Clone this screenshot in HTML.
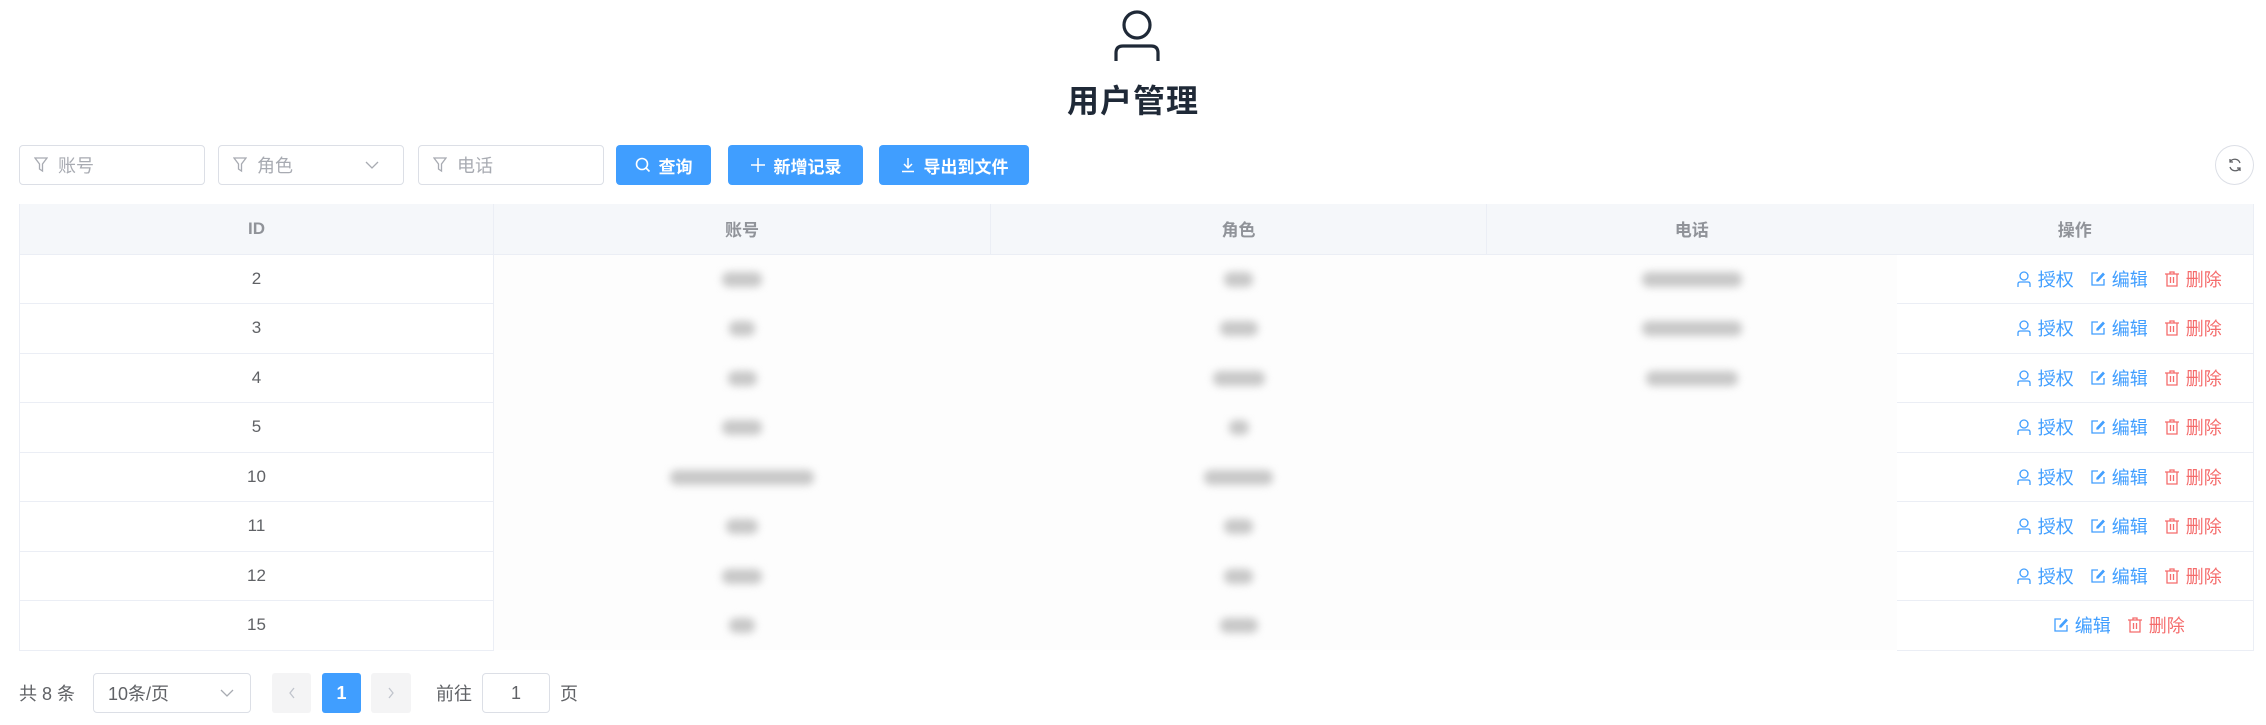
<!DOCTYPE html>
<html><head><meta charset="utf-8"><style>
*{box-sizing:border-box;margin:0;padding:0}
body{width:2266px;height:725px;background:#fff;font-family:"Liberation Sans","Noto Sans CJK SC",sans-serif;position:relative;overflow:hidden;color:#606266}
.abs{position:absolute}
.title{left:0;width:2266px;top:76px;text-align:center;font-size:32px;font-weight:bold;color:#1f2937;letter-spacing:1px}
.inp{top:145px;height:40px;border:1px solid #dcdfe6;border-radius:4px;display:flex;align-items:center;padding-left:14px;font-size:18px;color:#a8abb2}
.inp svg{margin-right:10px}
.btn{top:145px;height:40px;background:#409eff;border-radius:4px;color:#fff;font-size:17px;font-weight:bold;display:flex;align-items:center;justify-content:center}
.btn svg{margin-right:8px}
table{position:absolute;left:19px;top:204px;width:2235px;border-collapse:collapse;font-size:17px}
td,th{height:49.5px;text-align:center;border-bottom:1px solid #ebeef5;border-right:1px solid #ebeef5}
th{background:#f5f7fa;color:#909399;font-weight:bold;height:50px;font-size:17px}
tr td:first-child,tr th:first-child{border-left:1px solid #ebeef5}
tr td:last-child,tr th:last-child{border-right:1px solid #ebeef5}
td.m{border-right:none;border-bottom:none;background:#fdfdfd}
.b{display:inline-block;height:15px;background:#c8c8c8;filter:blur(4px);border-radius:7px;vertical-align:middle}
.ops{display:flex;justify-content:center;align-items:center;gap:16px;font-size:18px;padding-left:88px}
.op{display:flex;align-items:center;gap:6px;color:#409eff}
.op.d{color:#f56c6c}
.pg{top:673px;height:40px;display:flex;align-items:center;font-size:18px;color:#606266}
</style></head><body>
<svg class="abs" style="left:1108px;top:8px" width="58" height="56" viewBox="0 0 58 56"><circle cx="29" cy="17" r="13" fill="none" stroke="#1f2937" stroke-width="3.2"/><path d="M8 53V45Q8 38 15 38H43Q50 38 50 45V53" fill="none" stroke="#1f2937" stroke-width="3.2"/></svg>
<div class="abs title">用户管理</div>

<div class="abs inp" style="left:19px;width:186px"><svg width="14" height="16" viewBox="0 0 14 16"><path d="M1 1H13L8.5 7V14L5.5 12V7Z" fill="none" stroke="#a8abb2" stroke-width="1.3"/></svg>账号</div>
<div class="abs inp" style="left:218px;width:186px"><svg width="14" height="16" viewBox="0 0 14 16"><path d="M1 1H13L8.5 7V14L5.5 12V7Z" fill="none" stroke="#a8abb2" stroke-width="1.3"/></svg>角色<svg style="position:absolute;right:14px" width="14" height="10" viewBox="0 0 14 10"><path d="M1 2L7 8L13 2" fill="none" stroke="#a8abb2" stroke-width="1.3"/></svg></div>
<div class="abs inp" style="left:418px;width:186px"><svg width="14" height="16" viewBox="0 0 14 16"><path d="M1 1H13L8.5 7V14L5.5 12V7Z" fill="none" stroke="#a8abb2" stroke-width="1.3"/></svg>电话</div>
<div class="abs btn" style="left:616px;width:95px"><svg width="16" height="16" viewBox="0 0 16 16"><circle cx="7" cy="7" r="5.5" fill="none" stroke="#fff" stroke-width="1.6"/><path d="M11 11L14.5 14.5" stroke="#fff" stroke-width="1.6"/></svg>查询</div>
<div class="abs btn" style="left:728px;width:135px"><svg width="16" height="16" viewBox="0 0 16 16"><path d="M8 1V15M1 8H15" stroke="#fff" stroke-width="1.5"/></svg>新增记录</div>
<div class="abs btn" style="left:879px;width:150px"><svg width="16" height="16" viewBox="0 0 16 16"><path d="M8 1V11M4 7L8 11L12 7M2 14.5H14" fill="none" stroke="#fff" stroke-width="1.5"/></svg>导出到文件</div>
<div class="abs" style="left:2215px;top:145px;width:39px;height:40px;border:1px solid #dcdfe6;border-radius:50%;display:flex;align-items:center;justify-content:center"><svg width="16" height="16" viewBox="0 0 16 16"><path d="M13 6A5.5 5.5 0 0 0 3 5M3 2V5H6M3 10A5.5 5.5 0 0 0 13 11M13 14V11H10" fill="none" stroke="#606266" stroke-width="1.3"/></svg></div>

<table>
<tr><th style="width:474px">ID</th><th style="width:497px">账号</th><th style="width:496px">角色</th><th style="width:410px;border-right:none">电话</th><th>操作</th></tr>
<tr><td>2</td><td class="m"><span class="b" style="width:40px"></span></td><td class="m"><span class="b" style="width:29px"></span></td><td class="m"><span class="b" style="width:100px"></span></td><td><div class="ops"><span class="op"><svg width="16" height="18" viewBox="0 0 16 18"><circle cx="8" cy="6" r="4" fill="none" stroke="#409eff" stroke-width="1.3"/><path d="M2 17V14Q2 12 4 12H12Q14 12 14 14V17" fill="none" stroke="#409eff" stroke-width="1.3"/></svg>授权</span><span class="op"><svg width="16" height="16" viewBox="0 0 16 16"><path d="M8 2H2V14H14V8M7 9L13 2.5L14 3.5L8 10H7Z" fill="none" stroke="#409eff" stroke-width="1.3"/></svg>编辑</span><span class="op d"><svg width="16" height="18" viewBox="0 0 16 18"><path d="M1 4H15M6 4V2H10V4M3 4V16H13V4M6.5 7V13M9.5 7V13" fill="none" stroke="#f56c6c" stroke-width="1.3"/></svg>删除</span></div></td></tr>
<tr><td>3</td><td class="m"><span class="b" style="width:26px"></span></td><td class="m"><span class="b" style="width:38px"></span></td><td class="m"><span class="b" style="width:100px"></span></td><td><div class="ops"><span class="op"><svg width="16" height="18" viewBox="0 0 16 18"><circle cx="8" cy="6" r="4" fill="none" stroke="#409eff" stroke-width="1.3"/><path d="M2 17V14Q2 12 4 12H12Q14 12 14 14V17" fill="none" stroke="#409eff" stroke-width="1.3"/></svg>授权</span><span class="op"><svg width="16" height="16" viewBox="0 0 16 16"><path d="M8 2H2V14H14V8M7 9L13 2.5L14 3.5L8 10H7Z" fill="none" stroke="#409eff" stroke-width="1.3"/></svg>编辑</span><span class="op d"><svg width="16" height="18" viewBox="0 0 16 18"><path d="M1 4H15M6 4V2H10V4M3 4V16H13V4M6.5 7V13M9.5 7V13" fill="none" stroke="#f56c6c" stroke-width="1.3"/></svg>删除</span></div></td></tr>
<tr><td>4</td><td class="m"><span class="b" style="width:29px"></span></td><td class="m"><span class="b" style="width:52px"></span></td><td class="m"><span class="b" style="width:92px"></span></td><td><div class="ops"><span class="op"><svg width="16" height="18" viewBox="0 0 16 18"><circle cx="8" cy="6" r="4" fill="none" stroke="#409eff" stroke-width="1.3"/><path d="M2 17V14Q2 12 4 12H12Q14 12 14 14V17" fill="none" stroke="#409eff" stroke-width="1.3"/></svg>授权</span><span class="op"><svg width="16" height="16" viewBox="0 0 16 16"><path d="M8 2H2V14H14V8M7 9L13 2.5L14 3.5L8 10H7Z" fill="none" stroke="#409eff" stroke-width="1.3"/></svg>编辑</span><span class="op d"><svg width="16" height="18" viewBox="0 0 16 18"><path d="M1 4H15M6 4V2H10V4M3 4V16H13V4M6.5 7V13M9.5 7V13" fill="none" stroke="#f56c6c" stroke-width="1.3"/></svg>删除</span></div></td></tr>
<tr><td>5</td><td class="m"><span class="b" style="width:40px"></span></td><td class="m"><span class="b" style="width:20px"></span></td><td class="m"></td><td><div class="ops"><span class="op"><svg width="16" height="18" viewBox="0 0 16 18"><circle cx="8" cy="6" r="4" fill="none" stroke="#409eff" stroke-width="1.3"/><path d="M2 17V14Q2 12 4 12H12Q14 12 14 14V17" fill="none" stroke="#409eff" stroke-width="1.3"/></svg>授权</span><span class="op"><svg width="16" height="16" viewBox="0 0 16 16"><path d="M8 2H2V14H14V8M7 9L13 2.5L14 3.5L8 10H7Z" fill="none" stroke="#409eff" stroke-width="1.3"/></svg>编辑</span><span class="op d"><svg width="16" height="18" viewBox="0 0 16 18"><path d="M1 4H15M6 4V2H10V4M3 4V16H13V4M6.5 7V13M9.5 7V13" fill="none" stroke="#f56c6c" stroke-width="1.3"/></svg>删除</span></div></td></tr>
<tr><td>10</td><td class="m"><span class="b" style="width:144px"></span></td><td class="m"><span class="b" style="width:69px"></span></td><td class="m"></td><td><div class="ops"><span class="op"><svg width="16" height="18" viewBox="0 0 16 18"><circle cx="8" cy="6" r="4" fill="none" stroke="#409eff" stroke-width="1.3"/><path d="M2 17V14Q2 12 4 12H12Q14 12 14 14V17" fill="none" stroke="#409eff" stroke-width="1.3"/></svg>授权</span><span class="op"><svg width="16" height="16" viewBox="0 0 16 16"><path d="M8 2H2V14H14V8M7 9L13 2.5L14 3.5L8 10H7Z" fill="none" stroke="#409eff" stroke-width="1.3"/></svg>编辑</span><span class="op d"><svg width="16" height="18" viewBox="0 0 16 18"><path d="M1 4H15M6 4V2H10V4M3 4V16H13V4M6.5 7V13M9.5 7V13" fill="none" stroke="#f56c6c" stroke-width="1.3"/></svg>删除</span></div></td></tr>
<tr><td>11</td><td class="m"><span class="b" style="width:32px"></span></td><td class="m"><span class="b" style="width:29px"></span></td><td class="m"></td><td><div class="ops"><span class="op"><svg width="16" height="18" viewBox="0 0 16 18"><circle cx="8" cy="6" r="4" fill="none" stroke="#409eff" stroke-width="1.3"/><path d="M2 17V14Q2 12 4 12H12Q14 12 14 14V17" fill="none" stroke="#409eff" stroke-width="1.3"/></svg>授权</span><span class="op"><svg width="16" height="16" viewBox="0 0 16 16"><path d="M8 2H2V14H14V8M7 9L13 2.5L14 3.5L8 10H7Z" fill="none" stroke="#409eff" stroke-width="1.3"/></svg>编辑</span><span class="op d"><svg width="16" height="18" viewBox="0 0 16 18"><path d="M1 4H15M6 4V2H10V4M3 4V16H13V4M6.5 7V13M9.5 7V13" fill="none" stroke="#f56c6c" stroke-width="1.3"/></svg>删除</span></div></td></tr>
<tr><td>12</td><td class="m"><span class="b" style="width:40px"></span></td><td class="m"><span class="b" style="width:29px"></span></td><td class="m"></td><td><div class="ops"><span class="op"><svg width="16" height="18" viewBox="0 0 16 18"><circle cx="8" cy="6" r="4" fill="none" stroke="#409eff" stroke-width="1.3"/><path d="M2 17V14Q2 12 4 12H12Q14 12 14 14V17" fill="none" stroke="#409eff" stroke-width="1.3"/></svg>授权</span><span class="op"><svg width="16" height="16" viewBox="0 0 16 16"><path d="M8 2H2V14H14V8M7 9L13 2.5L14 3.5L8 10H7Z" fill="none" stroke="#409eff" stroke-width="1.3"/></svg>编辑</span><span class="op d"><svg width="16" height="18" viewBox="0 0 16 18"><path d="M1 4H15M6 4V2H10V4M3 4V16H13V4M6.5 7V13M9.5 7V13" fill="none" stroke="#f56c6c" stroke-width="1.3"/></svg>删除</span></div></td></tr>
<tr><td>15</td><td class="m"><span class="b" style="width:26px"></span></td><td class="m"><span class="b" style="width:38px"></span></td><td class="m"></td><td><div class="ops"><span class="op"><svg width="16" height="16" viewBox="0 0 16 16"><path d="M8 2H2V14H14V8M7 9L13 2.5L14 3.5L8 10H7Z" fill="none" stroke="#409eff" stroke-width="1.3"/></svg>编辑</span><span class="op d"><svg width="16" height="18" viewBox="0 0 16 18"><path d="M1 4H15M6 4V2H10V4M3 4V16H13V4M6.5 7V13M9.5 7V13" fill="none" stroke="#f56c6c" stroke-width="1.3"/></svg>删除</span></div></td></tr>
</table>

<div class="abs pg" style="left:19px">共 8 条</div>
<div class="abs pg" style="left:93px;width:158px;border:1px solid #dcdfe6;border-radius:4px;padding-left:14px">10条/页<svg style="position:absolute;right:16px" width="14" height="10" viewBox="0 0 14 10"><path d="M1 2L7 8L13 2" fill="none" stroke="#a8abb2" stroke-width="1.3"/></svg></div>
<div class="abs pg" style="left:272px;width:39px;background:#f4f4f5;border-radius:3px;justify-content:center"><svg width="10" height="14" viewBox="0 0 10 14"><path d="M7 2L3 7L7 12" fill="none" stroke="#c0c4cc" stroke-width="1.3"/></svg></div>
<div class="abs pg" style="left:322px;width:39px;background:#409eff;border-radius:3px;justify-content:center;color:#fff;font-weight:bold">1</div>
<div class="abs pg" style="left:371px;width:40px;background:#f4f4f5;border-radius:3px;justify-content:center"><svg width="10" height="14" viewBox="0 0 10 14"><path d="M3 2L7 7L3 12" fill="none" stroke="#c0c4cc" stroke-width="1.3"/></svg></div>
<div class="abs pg" style="left:436px">前往</div>
<div class="abs pg" style="left:482px;width:68px;border:1px solid #dcdfe6;border-radius:4px;justify-content:center">1</div>
<div class="abs pg" style="left:560px">页</div>
</body></html>
